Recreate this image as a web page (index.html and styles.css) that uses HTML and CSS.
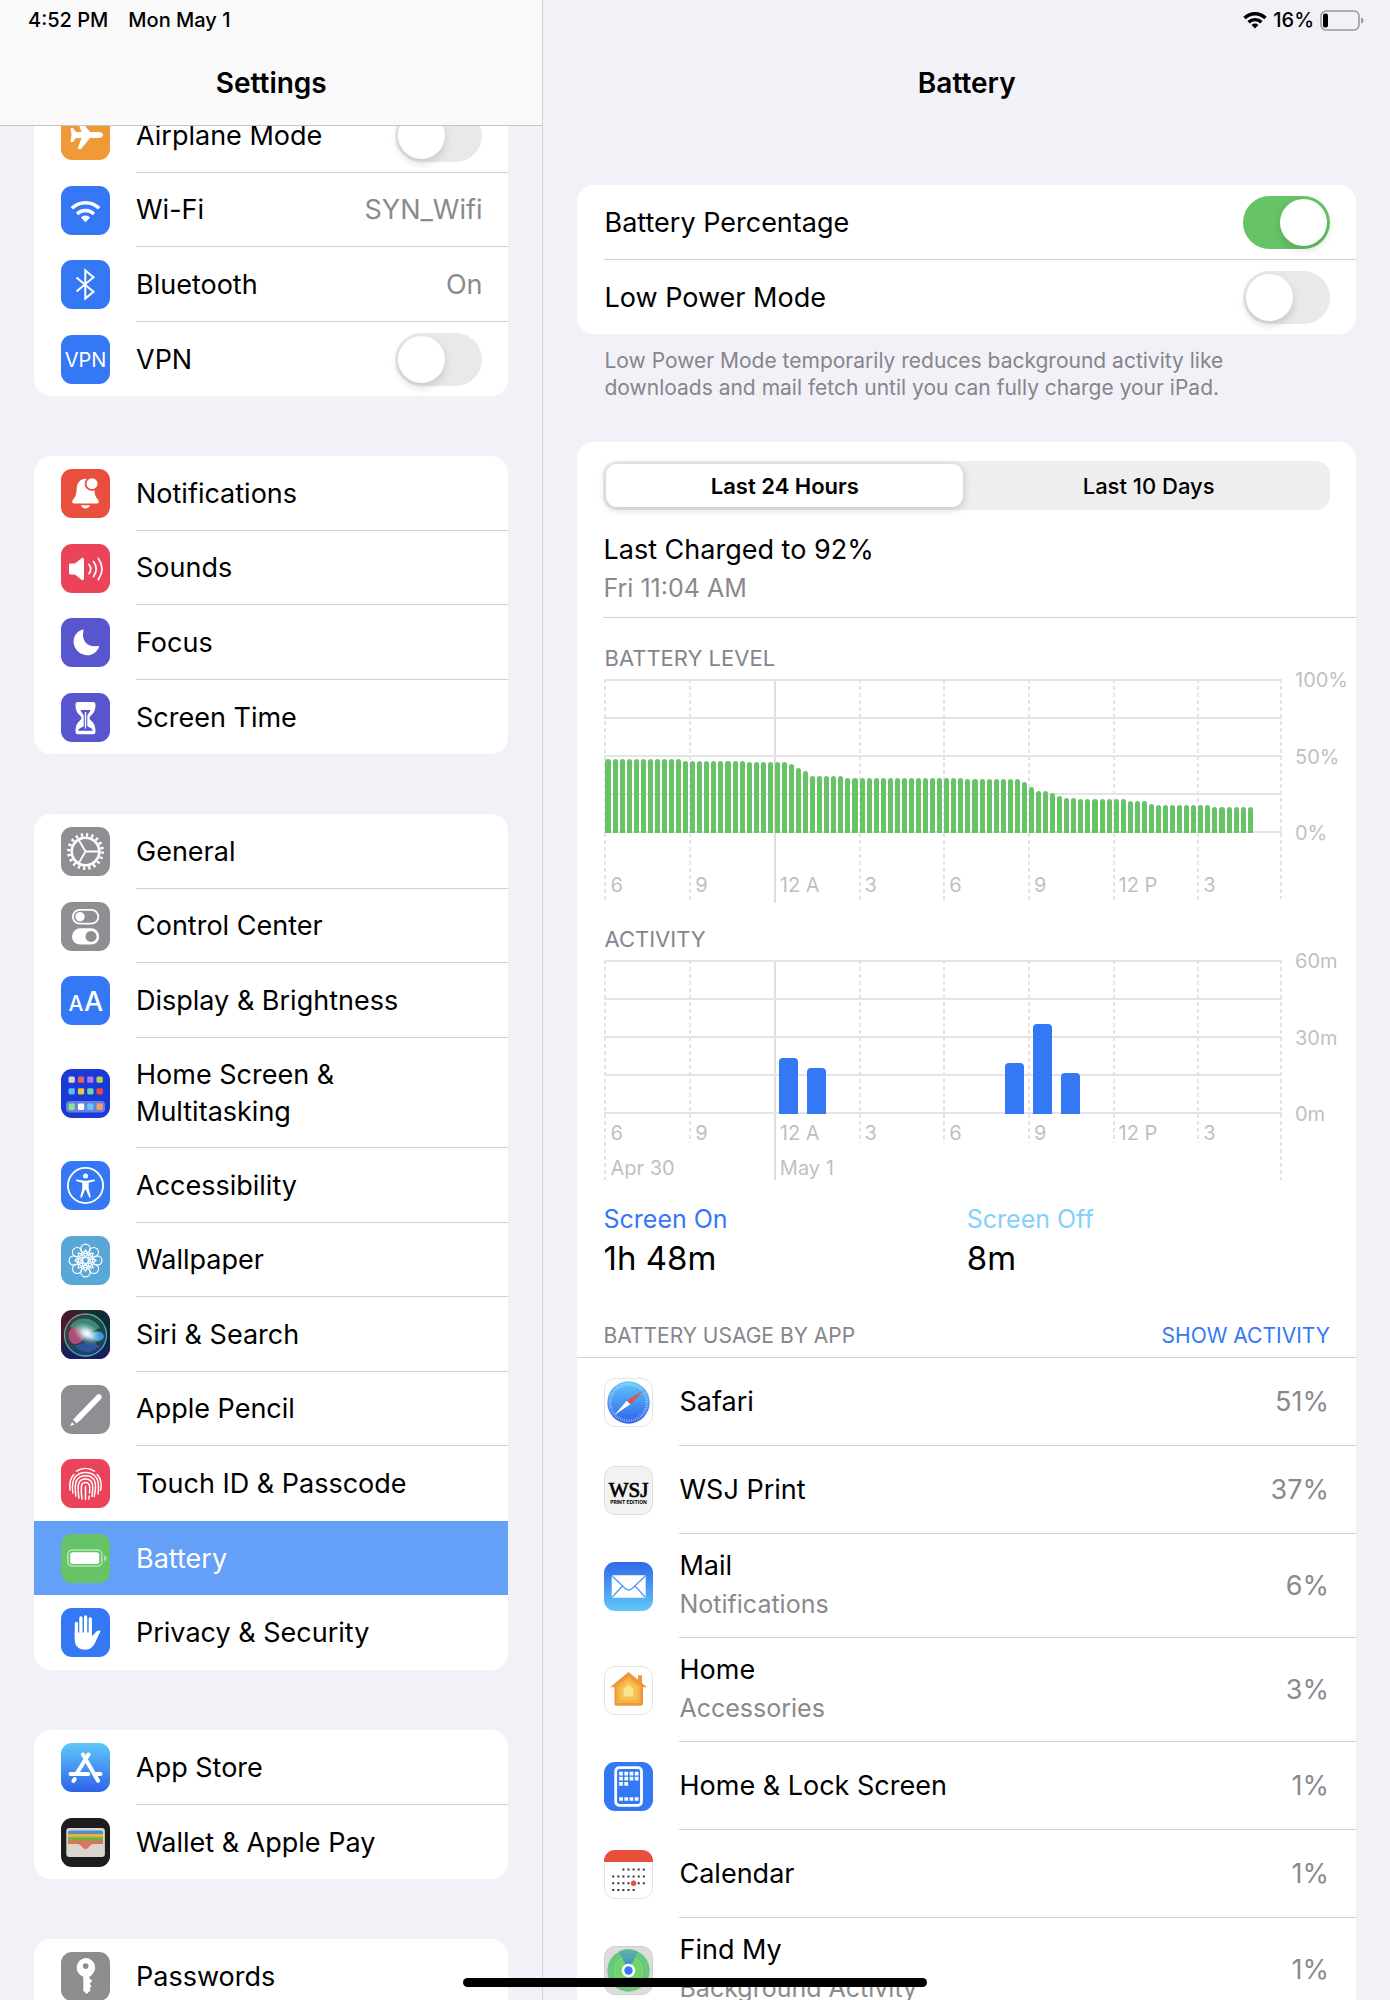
FILE: index.html
```html
<!DOCTYPE html>
<html lang="en">
<head>
<meta charset="UTF-8">
<meta name="viewport" content="width=device-width, initial-scale=1.0">
<title>Settings - Battery</title>
<link rel="stylesheet" href="styles.css">
</head>
<body>
<div class="status-bar">
  <span>4:52 PM</span>
  <span>Mon May 1</span>
  <div class="status-right">
    <svg width="24" height="18" viewBox="0 0 24 18" fill="none" stroke="#000" stroke-width="3.4">
      <path d="M1.5 7a15 15 0 0 1 21 0"/>
      <path d="M5.6 11.2a9.2 9.2 0 0 1 12.8 0"/>
      <path d="M12 17.5l-3.4-3.6a4.8 4.8 0 0 1 6.8 0z" fill="#000" stroke="none"/>
    </svg>
    <span>16%</span>
    <svg width="44" height="21" viewBox="0 0 44 21">
      <rect x="1" y="1" width="38" height="19" rx="5" fill="none" stroke="#9b9b9f" stroke-width="1.6"/>
      <rect x="3" y="3.5" width="5" height="14" rx="2"/>
      <path d="M41 7.5c1.8.7 2.5 1.700 2.500 3s-.7 2.300-2.500 3z" fill="#9b9b9f"/>
    </svg>
  </div>
</div>

<div class="app">
  <nav class="sidebar">
    <header class="sidebar-header"><h1>Settings</h1></header>
    <div class="sidebar-list">

      <div class="group">
        <div class="row">
          <svg class="icon" viewBox="0 0 49 49"><rect width="49" height="49" rx="11" fill="#f09a37"/><path fill="#fff" d="M42 24c0 1.8-2 3-5 3h-8l-9 11h-3.500l4-11H15l-3 4H9.500l1-7-1-7H12l3 4h5.500l-4-11H20l9 11h8c3 0 5 1.200 5 3z"/></svg>
          <div class="row-body"><label for="airplane">Airplane Mode</label><input class="toggle" type="checkbox" id="airplane"></div>
        </div>
        <a class="row" href="#wifi">
          <svg class="icon" viewBox="0 0 49 49"><rect width="49" height="49" rx="11" fill="#3478f6"/><g fill="none" stroke="#fff" stroke-width="3.400"><path d="M10.800 22.300a19.500 19.500 0 0 1 27.400 0"/><path d="M16 28a12 12 0 0 1 17 0"/></g><path fill="#fff" d="M24.500 36.200l-4.600-4.800a6.500 6.500 0 0 1 9.200 0z"/></svg>
          <span class="row-body">Wi-Fi <span class="value">SYN_Wifi</span></span>
        </a>
        <a class="row" href="#bluetooth">
          <svg class="icon" viewBox="0 0 49 49"><rect width="49" height="49" rx="11" fill="#3478f6"/><path fill="none" stroke="#fff" stroke-width="2" d="M15.500 17.500l17 14.200-8.200 6.800v-28l8.200 6.800-17 14.200"/></svg>
          <span class="row-body">Bluetooth <span class="value">On</span></span>
        </a>
        <div class="row">
          <svg class="icon" viewBox="0 0 49 49"><rect width="49" height="49" rx="11" fill="#3478f6"/><text class="icon-text" x="24.500" y="32" font-size="20">VPN</text></svg>
          <div class="row-body"><label for="vpn">VPN</label><input class="toggle" type="checkbox" id="vpn"></div>
        </div>
      </div>

      <div class="group">
        <a class="row" href="#notifications">
          <svg class="icon" viewBox="0 0 49 49"><rect width="49" height="49" rx="11" fill="#ea4e3d"/><path fill="#fff" d="M24.500 9.800c-5 0-8.500 4-8.800 9.700-.3 6-1 8-4 11.500-1 1.300-.5 3.500 1.300 3.500h23c1.800 0 2.300-2.200 1.300-3.500-3-3.500-3.700-5.500-4-11.500-.3-5.700-3.800-9.700-8.800-9.700zM20 36.300h9c-.5 2-2.300 3.200-4.500 3.200s-4-1.200-4.500-3.200z"/><circle cx="31" cy="14.700" r="7.300" fill="#ea4e3d"/><circle cx="31" cy="14.700" r="5.500" fill="#fff"/></svg>
          <span class="row-body">Notifications</span>
        </a>
        <a class="row" href="#sounds">
          <svg class="icon" viewBox="0 0 49 49"><rect width="49" height="49" rx="11" fill="#eb445a"/><path fill="#fff" d="M9.500 19.500H14l6.500-5.300c1-.8 2.500-.3 2.500 1.200v19.200c0 1.500-1.500 2-2.500 1.200L14 30.500H9.500c-1 0-1.500-.7-1.500-1.700v-7.600c0-1 .5-1.700 1.500-1.700z"/><g fill="none" stroke="#fff" stroke-width="1.700" stroke-linecap="round"><path d="M28 20.500q3.500 4.500 0 9M32.500 17.500q5.500 7.500 0 15M37.300 14.500q7.500 10.500 0 21"/></g></svg>
          <span class="row-body">Sounds</span>
        </a>
        <a class="row" href="#focus">
          <svg class="icon" viewBox="0 0 49 49"><rect width="49" height="49" rx="11" fill="#5756ce"/><path fill="#fff" d="M21.500 11.500c.8-.3 1.200.2 1 1-2.500 10 4 17.500 14.500 15.500.9-.1 1.300.3 1 1C34.500 38 24 40 17 33.500 9.500 26 12 14.500 21.500 11.500z"/></svg>
          <span class="row-body">Focus</span>
        </a>
        <a class="row" href="#screentime">
          <svg class="icon" viewBox="0 0 49 49"><rect width="49" height="49" rx="11" fill="#5756ce"/><path fill="#fff" d="M14.500 11.500c0-1.700 1-2.500 2.500-2.500h15c1.500 0 2.500.8 2.500 2.500 0 5.500-1.500 8.500-5 11.500-1.300 1.200-1.300 2.800 0 4 3.500 3 5 6 5 11.800 0 1.700-1 2.500-2.500 2.500H17c-1.500 0-2.500-.8-2.500-2.500 0-5.800 1.500-8.800 5-11.800 1.300-1.200 1.300-2.800 0-4-3.500-3-5-6-5-11.500z"/><path fill="#5756ce" d="M19.500 17h10c-.5 2.500-3.200 4-3.200 6v10c1 1.700 5 1.700 5.500 4.800H17.200c.5-3.100 4.500-3.100 5.500-4.800V23c0-2-2.700-3.500-3.200-6z"/><path stroke="#fff" stroke-width="1.400" d="M24.500 19v16.500"/></svg>
          <span class="row-body">Screen Time</span>
        </a>
      </div>

      <div class="group">
        <a class="row" href="#general">
          <svg class="icon" viewBox="0 0 49 49"><rect width="49" height="49" rx="11" fill="#8e8e93"/><g fill="none" stroke="#fff"><circle cx="24.500" cy="24.500" r="13.800" stroke-width="2.600"/><circle cx="24.500" cy="24.500" r="16.800" stroke-width="3.400" stroke-dasharray="2.300 2.978"/><path stroke-width="1.800" d="M24.500 24.500H38M24.500 24.500l-7-12M24.500 24.500l-7 12"/></g></svg>
          <span class="row-body">General</span>
        </a>
        <a class="row" href="#controlcenter">
          <svg class="icon" viewBox="0 0 49 49"><rect width="49" height="49" rx="11" fill="#8e8e93"/><rect x="11.900" y="7.900" width="25.400" height="13.800" rx="6.900" fill="none" stroke="#fff" stroke-width="1.800"/><circle cx="19" cy="14.800" r="4.700" fill="#fff"/><rect x="11" y="26.300" width="27.200" height="16.200" rx="8.100" fill="#fff"/><circle cx="30" cy="34.400" r="5.500" fill="#8e8e93"/></svg>
          <span class="row-body">Control Center</span>
        </a>
        <a class="row" href="#display">
          <svg class="icon" viewBox="0 0 49 49"><rect width="49" height="49" rx="11" fill="#3478f6"/><text class="icon-text icon-text-bold" x="15" y="35" font-size="21">A</text><text class="icon-text icon-text-bold" x="32.500" y="35" font-size="27">A</text></svg>
          <span class="row-body">Display &amp; Brightness</span>
        </a>
        <a class="row row-tall" href="#homescreen">
          <svg class="icon" viewBox="0 0 49 49"><rect width="49" height="49" rx="11" fill="#193ad4"/><rect x="5" y="32" width="39" height="11.600" rx="3.500" fill="#fff" opacity=".35"/>
            <rect x="7.500" y="7.500" width="6.300" height="6.300" rx="1.400" fill="#d8d6d0"/><rect x="16.900" y="7.500" width="6.300" height="6.300" rx="1.400" fill="#ef5d69"/><rect x="26.200" y="7.500" width="6.300" height="6.300" rx="1.400" fill="#b072f0"/><rect x="35.500" y="7.500" width="6.300" height="6.300" rx="1.400" fill="#b4d35c"/>
            <rect x="7.500" y="19.200" width="6.300" height="6.300" rx="1.400" fill="#5cbcf5"/><rect x="16.900" y="19.200" width="6.300" height="6.300" rx="1.400" fill="#f5bf41"/><rect x="26.200" y="19.200" width="6.300" height="6.300" rx="1.400" fill="#72d6a5"/><rect x="35.500" y="19.200" width="6.300" height="6.300" rx="1.400" fill="#ea4e3d"/>
            <rect x="7.500" y="34.600" width="6.300" height="6.300" rx="1.400" fill="#86ec80"/><rect x="16.900" y="34.600" width="6.300" height="6.300" rx="1.400" fill="#fff"/><rect x="26.200" y="34.600" width="6.300" height="6.300" rx="1.400" fill="#5fc9f8"/><rect x="35.500" y="34.600" width="6.300" height="6.300" rx="1.400" fill="#f2a060"/></svg>
          <span class="row-body"><span>Home Screen &amp;<br>Multitasking</span></span>
        </a>
        <a class="row" href="#accessibility">
          <svg class="icon" viewBox="0 0 49 49"><rect width="49" height="49" rx="11" fill="#3478f6"/><circle cx="24.500" cy="24.500" r="17.600" fill="none" stroke="#fff" stroke-width="1.800"/><circle cx="24.500" cy="15" r="2.500" fill="#fff"/><path fill="#fff" d="M16 18.600l6 1c1.600.3 3.400.3 5 0l6-1c1.300-.1 1.500 1.400.3 1.700l-5.600 1.400v5.500l2 8.400c.2 1.300-1.300 1.600-1.700.5l-3.200-7.600h-.6L21 36.100c-.4 1.100-1.900.8-1.700-.5l2-8.400v-5.500l-5.600-1.400c-1.200-.3-1-1.800.3-1.700z"/></svg>
          <span class="row-body">Accessibility</span>
        </a>
        <a class="row" href="#wallpaper">
          <svg class="icon" viewBox="0 0 49 49"><rect width="49" height="49" rx="11" fill="#59a7d7"/>
            <defs><g id="petal"><circle cx="24.500" cy="12.800" r="4.700"/><path d="M24.500 21c-2.600-2.600-2.600-4.400 0-7 2.600 2.600 2.600 4.400 0 7z"/></g></defs>
            <g fill="none" stroke="#fff" stroke-width="1.200"><use href="#petal"/><use href="#petal" transform="rotate(45 24.500 24.500)"/><use href="#petal" transform="rotate(90 24.500 24.500)"/><use href="#petal" transform="rotate(135 24.500 24.500)"/><use href="#petal" transform="rotate(180 24.500 24.500)"/><use href="#petal" transform="rotate(225 24.500 24.500)"/><use href="#petal" transform="rotate(270 24.500 24.500)"/><use href="#petal" transform="rotate(315 24.500 24.500)"/><circle cx="24.500" cy="24.500" r="3"/></g></svg>
          <span class="row-body">Wallpaper</span>
        </a>
        <a class="row" href="#siri">
          <svg class="icon" viewBox="0 0 49 49">
            <defs>
              <linearGradient id="siriBg" x1="0" y1="0" x2="1" y2=".3"><stop offset="0" stop-color="#5c1029"/><stop offset=".5" stop-color="#16302f"/><stop offset="1" stop-color="#0c2a33"/></linearGradient>
              <linearGradient id="siriRing" x1="0" y1="0" x2="1" y2="1"><stop offset="0" stop-color="#d86a84"/><stop offset=".4" stop-color="#46b98a"/><stop offset="1" stop-color="#4fa3e8"/></linearGradient>
              <linearGradient id="siriBase" x1="0" y1="0" x2="0" y2="1"><stop offset=".5" stop-color="#1c1a6a" stop-opacity="0"/><stop offset="1" stop-color="#1c1a6a"/></linearGradient>
              <radialGradient id="siriGlow"><stop offset="0" stop-color="#fff"/><stop offset=".3" stop-color="#e8f8ff" stop-opacity=".85"/><stop offset="1" stop-color="#7fd9d0" stop-opacity="0"/></radialGradient>
            </defs>
            <rect width="49" height="49" rx="11" fill="url(#siriBg)"/><rect width="49" height="49" rx="11" fill="url(#siriBase)"/>
            <circle cx="24.500" cy="25" r="21" fill="#2b6a6c" fill-opacity=".45" stroke="url(#siriRing)" stroke-width="1.300"/>
            <path d="M9 17c4-10 22-13 30 1-6 2-8 4-13 7-5-4-11-5-17-8z" fill="#57b08f" opacity=".6"/>
            <path d="M26 25c-7-8-13-11-17-5s0 15 6 14 8-6 11-9z" fill="#dd4f7e" opacity=".75"/>
            <path d="M26 25c6-3 11-5 15-2s1 8-4 8-8-3-11-6z" fill="#4aa3ee" opacity=".85"/>
            <path d="M14 36c8-4 16-4 23 0-6 8-16 8-23 0z" fill="#3462c9" opacity=".6"/>
            <path d="M26 25l12 13" stroke="#d84f8a" stroke-width="1" opacity=".7"/>
            <ellipse cx="26" cy="23.500" rx="15" ry="10" fill="url(#siriGlow)" transform="rotate(30 26 23.500)"/>
          </svg>
          <span class="row-body">Siri &amp; Search</span>
        </a>
        <a class="row" href="#pencil">
          <svg class="icon" viewBox="0 0 49 49"><rect width="49" height="49" rx="11" fill="#8e8e93"/><path stroke="#fff" stroke-width="5.800" stroke-linecap="round" d="M37.700 12.200L18 32.500"/><path fill="#fff" d="M16.500 30L12 34.800l3.600 3.600 4.900-4.500zM11 37.200l2.400 2.300L9 41z"/></svg>
          <span class="row-body">Apple Pencil</span>
        </a>
        <a class="row row-plain" href="#touchid">
          <svg class="icon" viewBox="0 0 49 49"><rect width="49" height="49" rx="11" fill="#eb445a"/><g fill="none" stroke="#fff" stroke-width="1.500" stroke-linecap="round"><path d="M15.500 12.200a16.500 16.500 0 0 1 18 0M9 31c-.8-6.500.2-11.500 3.800-15.500M36.200 15.500c3.500 4 4.800 9.500 3.300 15.800M11.800 34c-1-8.500-.3-13 2.800-16.500 5-5 14.500-5.500 19.800 0 3.300 3.500 3.800 9 2.600 17.500M14.800 37c-.8-6.500-1-12.500.8-15.500 3.500-6.500 14.500-6.500 17.800 0 1.500 3 1.300 9-.2 16M18 39c-1-6-1.300-11-.3-14.500 2-6 11.500-6 13.500 0 .8 3 .7 7-.3 13M21 40c-.8-5-1-9.500-.5-13.500 1-4 7-4 8 0 .4 2.500.3 5 0 7.500M24.500 27.500v13M28.200 37l-.4 3"/></g></svg>
          <span class="row-body">Touch ID &amp; Passcode</span>
        </a>
        <a class="row row-plain row-active" href="#battery">
          <svg class="icon" viewBox="0 0 49 49"><rect width="49" height="49" rx="11" fill="#67c466"/><rect x="6.800" y="16.100" width="34.200" height="16" rx="4.500" fill="none" stroke="#fff" stroke-opacity=".55" stroke-width="1.500"/><rect x="9.200" y="18.300" width="29" height="11.800" rx="2.500" fill="#fff"/><path fill="#fff" fill-opacity=".55" d="M43.200 21.500c1.600.6 2.300 1.400 2.300 2.700s-.7 2.100-2.300 2.700z"/></svg>
          <span class="row-body">Battery</span>
        </a>
        <a class="row" href="#privacy">
          <svg class="icon" viewBox="0 0 49 49"><rect width="49" height="49" rx="11" fill="#3478f6"/><g fill="none" stroke="#fff" stroke-width="3.300" stroke-linecap="round"><path d="M15.400 15.500V30M19.900 10v18M24.600 9v18M29.300 11v18"/></g><path fill="#fff" d="M13.750 24.500h17.200v3.700l4.500-4.700c1.200-1.200 3.300-1.300 4.300-.3-2.300 3.300-3.500 7.300-5.500 11.300-2.300 4.700-5.200 7.200-10 7.200-6.500 0-10.500-3.700-10.500-10z"/></svg>
          <span class="row-body">Privacy &amp; Security</span>
        </a>
      </div>

      <div class="group">
        <a class="row" href="#appstore">
          <svg class="icon" viewBox="0 0 49 49"><defs><linearGradient id="storeBg" x1="0" y1="0" x2="0" y2="1"><stop offset="0" stop-color="#5fc8f9"/><stop offset="1" stop-color="#2f62e8"/></linearGradient></defs><rect width="49" height="49" rx="11" fill="url(#storeBg)"/><g stroke="#fff" stroke-width="4" stroke-linecap="round" fill="none"><path d="M27.500 11.500L16.300 29.500M9.500 31h17.800M35 31h4.500M13.700 36l-1.200 2"/><path d="M22 11.500l2 3.200M26 18.500l11 19.300"/></g></svg>
          <span class="row-body">App Store</span>
        </a>
        <a class="row" href="#wallet">
          <svg class="icon" viewBox="0 0 49 49"><rect width="49" height="49" rx="11" fill="#1d1d1f"/><rect x="5.300" y="10" width="38.600" height="29" rx="3" fill="#d9d5cc"/><path fill="#4a93c9" d="M9 12.500h31a2 2 0 0 1 2 2V20H7v-5.500a2 2 0 0 1 2-2z"/><path fill="#f0ac3c" d="M7 16h35v6H7z"/><path fill="#69b545" d="M7 19.300h35v6H7z"/><path fill="#e2705f" d="M7 22.700h35V26h-9.500c-4 0-4.500 5-8 5s-4-5-8-5H7z"/></svg>
          <span class="row-body">Wallet &amp; Apple Pay</span>
        </a>
      </div>

      <div class="group">
        <a class="row" href="#passwords">
          <svg class="icon" viewBox="0 0 49 49"><rect width="49" height="49" rx="11" fill="#8d8d8f"/><path fill="#fff" fill-rule="evenodd" d="M24.700 6a9.600 9.600 0 0 1 3.700 18.400v2.100l3 2.300-2.700 3 1.700 2.500-1.500 2 .7 2-4 3.700-3.300-3.200V24.700A9.600 9.600 0 0 1 24.700 6zm0 5.300a2.800 2.800 0 1 0 0 5.600 2.800 2.800 0 0 0 0-5.600z"/></svg>
          <span class="row-body">Passwords</span>
        </a>
      </div>
    </div>
  </nav>

  <main class="detail">
    <header class="detail-header"><h2>Battery</h2></header>

    <section class="card">
      <div class="option"><div class="row-body"><label for="percentage">Battery Percentage</label><input class="toggle" type="checkbox" id="percentage" checked></div></div>
      <div class="option"><div class="row-body"><label for="lowpower">Low Power Mode</label><input class="toggle" type="checkbox" id="lowpower"></div></div>
    </section>
    <p class="footnote">Low Power Mode temporarily reduces background activity like downloads and mail fetch until you can fully charge your iPad.</p>

    <section class="card usage-card">
      <div class="segmented">
        <button class="segment selected" type="button">Last 24 Hours</button>
        <button class="segment" type="button">Last 10 Days</button>
      </div>

      <div class="charged">
        <p>Last Charged to 92%</p>
        <p class="sub">Fri 11:04 AM</p>
      </div>

      <h3 class="chart-title">Battery Level</h3>
      <div class="chart chart-level">
        <div class="plot">
          <div class="columns">
            <div>6</div><div>9</div><div class="midnight">12 A</div><div>3</div><div>6</div><div>9</div><div>12 P</div><div>3</div>
          </div>
          <div class="lines"><i></i><i></i><i></i><i></i><i></i></div>
          <div class="bars" id="level"></div>
        </div>
        <div class="scale"><span>100%</span><span>50%</span><span>0%</span></div>
      </div>

      <h3 class="chart-title">Activity</h3>
      <div class="chart chart-activity">
        <div class="plot">
          <div class="columns">
            <div>6<br>Apr 30</div><div>9</div><div class="midnight">12 A<br>May 1</div><div>3</div><div>6</div><div>9</div><div>12 P</div><div>3</div>
          </div>
          <div class="lines"><i></i><i></i><i></i><i></i><i></i></div>
          <div class="bars" id="activity"></div>
        </div>
        <div class="scale"><span>60m</span><span>30m</span><span>0m</span></div>
      </div>

      <dl class="totals">
        <div><dt class="on">Screen On</dt><dd>1h 48m</dd></div>
        <div><dt class="off">Screen Off</dt><dd>8m</dd></div>
      </dl>

      <div class="usage-header">
        <h3>Battery Usage by App</h3>
        <button type="button">SHOW ACTIVITY</button>
      </div>

      <ul class="usage">
        <li>
          <svg class="icon" viewBox="0 0 49 49"><rect x=".5" y=".5" width="48" height="48" rx="10.500" fill="#fff" stroke="#e4e4e6"/><circle cx="24.500" cy="24.500" r="21.200" fill="url(#storeBg)"/><circle cx="24.500" cy="24.500" r="18.300" fill="none" stroke="#fff" stroke-opacity=".6" stroke-width="3" stroke-dasharray=".6 1.316"/><path fill="#ea4e3d" d="M40 12L22.700 22.700l3.600 3.600z"/><path fill="#fff" d="M10.500 37l12.200-14.300 3.600 3.600z"/></svg>
          <div class="usage-body"><div><p>Safari</p></div><span class="value">51%</span></div>
        </li>
        <li>
          <svg class="icon" viewBox="0 0 49 49"><rect x=".5" y=".5" width="48" height="48" rx="10.500" fill="#f2f2f2" stroke="#dedee0"/><text class="wsj" x="24.500" y="31">WSJ</text><text class="wsj-sub" x="24.500" y="38">PRINT EDITION</text></svg>
          <div class="usage-body"><div><p>WSJ Print</p></div><span class="value">37%</span></div>
        </li>
        <li>
          <svg class="icon" viewBox="0 0 49 49"><defs><linearGradient id="mailBg" x1="0" y1="0" x2="0" y2="1"><stop offset="0" stop-color="#3068e8"/><stop offset="1" stop-color="#5fc8f9"/></linearGradient></defs><rect width="49" height="49" rx="11" fill="url(#mailBg)"/><rect x="7.700" y="13.300" width="34" height="22.400" rx="1.500" fill="#fff"/><path fill="none" stroke="#4b9af3" stroke-width="1.300" d="M8.300 14.200l13 12.300c2.200 2 4.600 2 6.800 0l13-12.300M8.300 35l10.200-11M41.100 35L31 24"/></svg>
          <div class="usage-body tall"><div><p>Mail</p><p class="sub">Notifications</p></div><span class="value">6%</span></div>
        </li>
        <li>
          <svg class="icon" viewBox="0 0 49 49"><rect x=".5" y=".5" width="48" height="48" rx="10.500" fill="#fff" stroke="#e4e4e6"/><path fill="#ef9636" d="M24.500 6L34 13.800V10.500c0-.8.400-1.200 1.200-1.200h1.600c.8 0 1.200.4 1.200 1.200v6.600l5 4.100H39v16.500c0 1.300-.8 2-2 2H12.500c-1.200 0-2-.7-2-2V21.200H6z"/><path fill="#f3b04a" d="M24.500 10.500L36.500 20v17h-24V20z"/><path fill="#f5c24f" d="M24.500 14.500L33.500 21.500v12.700h-18V21.500z"/><path fill="#fae48c" d="M24.500 18.500l5 4.500v7.500h-10V23z"/></svg>
          <div class="usage-body tall"><div><p>Home</p><p class="sub">Accessories</p></div><span class="value">3%</span></div>
        </li>
        <li>
          <svg class="icon" viewBox="0 0 49 49"><rect width="49" height="49" rx="11" fill="#3478f6"/><rect x="11.700" y="5.700" width="25.800" height="37.600" rx="3.500" fill="none" stroke="#fff" stroke-width="2.800"/><g stroke="#fff" stroke-width="3.700" stroke-dasharray="3.700 1.500"><path d="M15.200 11.600h19.300M15.200 16.700h19.300M15.200 21.800h8.900M15.200 37h19.300"/></g></svg>
          <div class="usage-body"><div><p>Home &amp; Lock Screen</p></div><span class="value">1%</span></div>
        </li>
        <li>
          <svg class="icon" viewBox="0 0 49 49"><rect x=".5" y=".5" width="48" height="48" rx="10.500" fill="#fff" stroke="#e4e4e6"/><path fill="#ea4e3d" d="M0 12V11A11 11 0 0 1 11 0h27a11 11 0 0 1 11 11v1z"/><g stroke="#333" stroke-width="2" stroke-dasharray="2 3.100"><path d="M18.400 19.600H41M8.200 26.400H41M8.200 33.200H41M8.200 40h22.500"/></g><circle cx="29.600" cy="33.200" r="2.700" fill="#ea4e3d"/></svg>
          <div class="usage-body"><div><p>Calendar</p></div><span class="value">1%</span></div>
        </li>
        <li>
          <svg class="icon" viewBox="0 0 49 49"><defs><linearGradient id="beam" x1="0" y1="0" x2="0" y2="1"><stop offset="0" stop-color="#3478f6" stop-opacity=".2"/><stop offset="1" stop-color="#3478f6"/></linearGradient></defs><rect x=".5" y=".5" width="48" height="48" rx="10.500" fill="#dcdcdb" stroke="#cfcfcf"/><circle cx="24.500" cy="24.500" r="21.200" fill="#67c980"/><circle cx="24.500" cy="24.500" r="14" fill="#6fd368" stroke="#82dc7f"/><path fill="url(#beam)" d="M24.500 24.500L15 5.500a21 21 0 0 1 19 0z"/><circle cx="24.500" cy="24.500" r="6.800" fill="#fff"/><circle cx="24.500" cy="24.500" r="4.200" fill="#3478f6"/></svg>
          <div class="usage-body tall"><div><p>Find My</p><p class="sub">Background Activity</p></div><span class="value">1%</span></div>
        </li>
      </ul>
    </section>
  </main>
</div>

<div class="home-indicator"></div>

<script>
  // [percent, number of 15 minute samples]
  const level = [
    [48, 11], [47, 9], [46, 6], [45, 1], [42, 1], [40, 1], [37, 5],
    [36, 17], [35, 8], [33, 1], [30, 1], [27, 2], [26, 1], [24, 1],
    [23, 2], [22, 7], [21, 3], [19, 1], [18, 8], [17, 6]
  ];
  // minutes of use per hour, starting at 6 PM
  const activity = [0, 0, 0, 0, 0, 0, 22, 18, 0, 0, 0, 0, 0, 0, 20, 35, 16];

  function addBar(parent, percent) {
    const bar = document.createElement('div');
    bar.className = 'bar';
    bar.style.height = percent + '%';
    parent.appendChild(bar);
  }

  const levelBars = document.getElementById('level');
  level.forEach(([percent, count]) => {
    for (let i = 0; i < count; i++) {
      addBar(levelBars, percent);
    }
  });

  const activityBars = document.getElementById('activity');
  activity.forEach(minutes => addBar(activityBars, minutes / 60 * 100));

  const segments = document.querySelectorAll('.segment');
  segments.forEach(segment => {
    segment.addEventListener('click', () => {
      segments.forEach(s => s.classList.remove('selected'));
      segment.classList.add('selected');
    });
  });
</script>
</body>
</html>
```
FILE: styles.css
```css
* {
  box-sizing: border-box;
}

body {
  margin: 0;
  background-color: #f2f1f7;
  color: #000;
  font-family: Inter, "Liberation Sans", sans-serif;
  font-size: 27px;
  line-height: 37px;
}

h1, h2, h3, p, ul, dl, dd {
  margin: 0;
  padding: 0;
}

a {
  color: inherit;
  text-decoration: none;
}

button {
  border: none;
  background: none;
  padding: 0;
  font-family: inherit;
  cursor: pointer;
}

.status-bar {
  position: absolute;
  z-index: 3;
  top: 0;
  left: 0;
  right: 0;
  display: flex;
  gap: 20px;
  align-items: center;
  height: 40px;
  padding: 0 26px 0 28px;
  font-size: 20px;
  font-weight: 500;
}

.status-right {
  display: flex;
  align-items: center;
  gap: 6px;
  margin-left: auto;
}

.app {
  display: grid;
  grid-template-columns: 39.1% 1fr;
  height: 100vh;
}

/* sidebar */
.sidebar {
  position: relative;
  min-height: 0;
  border-right: 1px solid #d3d2d8;
}

.sidebar-header {
  position: absolute;
  z-index: 2;
  top: 0;
  left: 0;
  right: 0;
  height: 126px;
  padding-top: 65px;
  background-color: #f9f9f9;
  border-bottom: 1px solid #c6c6c8;
}

h1, h2 {
  font-size: 28px;
  font-weight: 600;
  text-align: center;
}

.sidebar-list {
  display: flex;
  flex-direction: column;
  gap: 60px;
  height: 100%;
  padding: 98px 34px 0;
  overflow-y: auto;
  scrollbar-width: none;
}

.group {
  flex: none;
  background-color: #fff;
  border-radius: 17px;
}

.row {
  display: flex;
  align-items: center;
  gap: 26px;
  padding-left: 27px;
}

.icon {
  flex: none;
  width: 49px;
  height: 49px;
}

.icon-text {
  fill: #fff;
  text-anchor: middle;
}

.icon-text-bold {
  font-weight: 500;
}

.row-body {
  flex: 1;
  display: flex;
  align-items: center;
  justify-content: space-between;
  min-height: 75px;
  padding-right: 26px;
  border-bottom: 1px solid #d1d1d4;
}

.row:nth-child(even) .row-body,
.option:last-child .row-body {
  min-height: 74px;
}

.row-tall:nth-child(even) .row-body {
  min-height: 110px;
}

.row:last-child .row-body,
.option:last-child .row-body,
.row-plain .row-body {
  border-bottom: none;
}

.row-active {
  background-color: #64a0f8;
  color: #fff;
}

.value {
  color: #8a8a8e;
}

.toggle {
  appearance: none;
  flex: none;
  width: 87px;
  height: 53px;
  margin: 0;
  padding: 3px;
  border-radius: 27px;
  background-color: #e9e9ea;
  cursor: pointer;
}

.toggle::before {
  content: "";
  display: block;
  width: 47px;
  height: 47px;
  border-radius: 50%;
  background-color: #fff;
  box-shadow: 0 4px 8px rgba(0, 0, 0, 0.15);
}

.toggle:checked {
  background-color: #67c466;
}

.toggle:checked::before {
  margin-left: auto;
}

/* detail */
.detail {
  min-height: 0;
  padding: 0 34px;
  overflow-y: auto;
  scrollbar-width: none;
}

.detail-header {
  height: 185px;
  padding-top: 65px;
}

.card {
  background-color: #fff;
  border-radius: 17px;
}

.option {
  padding-left: 27px;
}

.footnote {
  max-width: 720px;
  padding: 13px 27px 41px;
  color: #85858b;
  font-size: 21px;
  line-height: 27px;
}

.usage-card {
  padding-top: 19px;
}

.segmented {
  display: flex;
  gap: 7px;
  height: 49px;
  margin: 0 26px;
  padding: 3px;
  border-radius: 14px;
  background-color: #eeeeef;
}

.segment {
  flex: 1;
  border-radius: 11px;
  font-size: 22px;
  font-weight: 500;
}

.segment.selected {
  background-color: #fff;
  font-weight: 600;
  box-shadow: 0 2px 8px rgba(0, 0, 0, 0.2);
}

.charged {
  margin: 21px 0 27px 26px;
  padding-bottom: 9px;
  border-bottom: 1px solid #d1d1d4;
}

.sub {
  color: #8a8a8e;
  font-size: 25px;
  line-height: 40px;
}

.chart-title,
.usage-header {
  color: #85858b;
  font-size: 22px;
  font-weight: 400;
  line-height: 27px;
  text-transform: uppercase;
}

.chart-title {
  margin: 0 0 7px 27px;
}

.chart {
  display: grid;
  grid-template-columns: 1fr 74px;
  margin-left: 27px;
  margin-bottom: 27px;
  color: #bfbfc2;
  font-size: 20px;
  line-height: 35px;
}

.plot {
  position: relative;
}

.columns {
  display: grid;
  grid-template-columns: repeat(8, 1fr);
  height: 220px;
  background: repeating-linear-gradient(#e3e3e5 0 4px, transparent 4px 7px) right / 2px 100% no-repeat;
}

.columns div {
  padding-left: 6px;
  background: repeating-linear-gradient(#e3e3e5 0 4px, transparent 4px 7px) left / 2px 100% no-repeat;
}

.columns .midnight {
  background: linear-gradient(#dededf, #dededf) left / 2px 100% no-repeat;
}

.chart-level .columns div {
  padding-top: 189px;
}

.chart-activity .columns div {
  height: 183px;
  padding-top: 156px;
}

.chart-activity .columns div:first-child,
.chart-activity .columns .midnight {
  height: 220px;
}

.lines,
.bars {
  position: absolute;
  top: 0;
  left: 0;
  right: 0;
  height: 154px;
}

.lines {
  display: flex;
  flex-direction: column;
  justify-content: space-between;
}

.lines i {
  height: 2px;
  background-color: #e4e4e6;
}

.bars {
  display: grid;
  align-items: end;
}

#level {
  grid-template-columns: repeat(96, 1fr);
}

#activity {
  grid-template-columns: repeat(24, 1fr);
}

#level .bar {
  margin-right: 1px;
  margin-left: 1px;
  border-radius: 3px 3px 0 0;
  background-color: #67c466;
}

#activity .bar {
  margin: 0 4px 0 5px;
  border-radius: 4px 4px 0 0;
  background-color: #3478f6;
}

.scale {
  display: flex;
  flex-direction: column;
  justify-content: space-between;
  height: 173px;
  margin-top: -9px;
  padding-left: 13px;
  line-height: 20px;
}

.totals {
  display: grid;
  grid-template-columns: 1fr 1fr;
  margin: -6px 26px 44px;
}

.totals dt {
  font-size: 25px;
}

.totals dd {
  font-size: 33px;
  line-height: 40px;
}

.on {
  color: #3478f6;
}

.off {
  color: #83d0fa;
}

.usage-header {
  display: flex;
  justify-content: space-between;
  padding: 0 26px 8px;
  border-bottom: 1px solid #d1d1d4;
}

.usage-header h3 {
  font-size: 21px;
  font-weight: 400;
}

.usage-header button {
  color: #3478f6;
  font-size: 21px;
  line-height: 27px;
}

.usage {
  list-style: none;
}

.usage li {
  display: flex;
  align-items: center;
  gap: 26px;
  padding-left: 27px;
}

.usage-body {
  flex: 1;
  display: flex;
  align-items: center;
  justify-content: space-between;
  min-height: 88px;
  padding-right: 27px;
  border-bottom: 1px solid #d1d1d4;
}

.usage-body.tall {
  min-height: 104px;
}

.wsj {
  font-family: "Liberation Serif", serif;
  font-size: 21px;
  stroke: #000;
  stroke-width: 0.7px;
  text-anchor: middle;
}

.wsj-sub {
  font-size: 5px;
  font-weight: 700;
  text-anchor: middle;
}

.home-indicator {
  position: fixed;
  z-index: 4;
  bottom: 13px;
  left: 33.3%;
  right: 33.3%;
  height: 9px;
  border-radius: 5px;
  background-color: #000;
}
```
